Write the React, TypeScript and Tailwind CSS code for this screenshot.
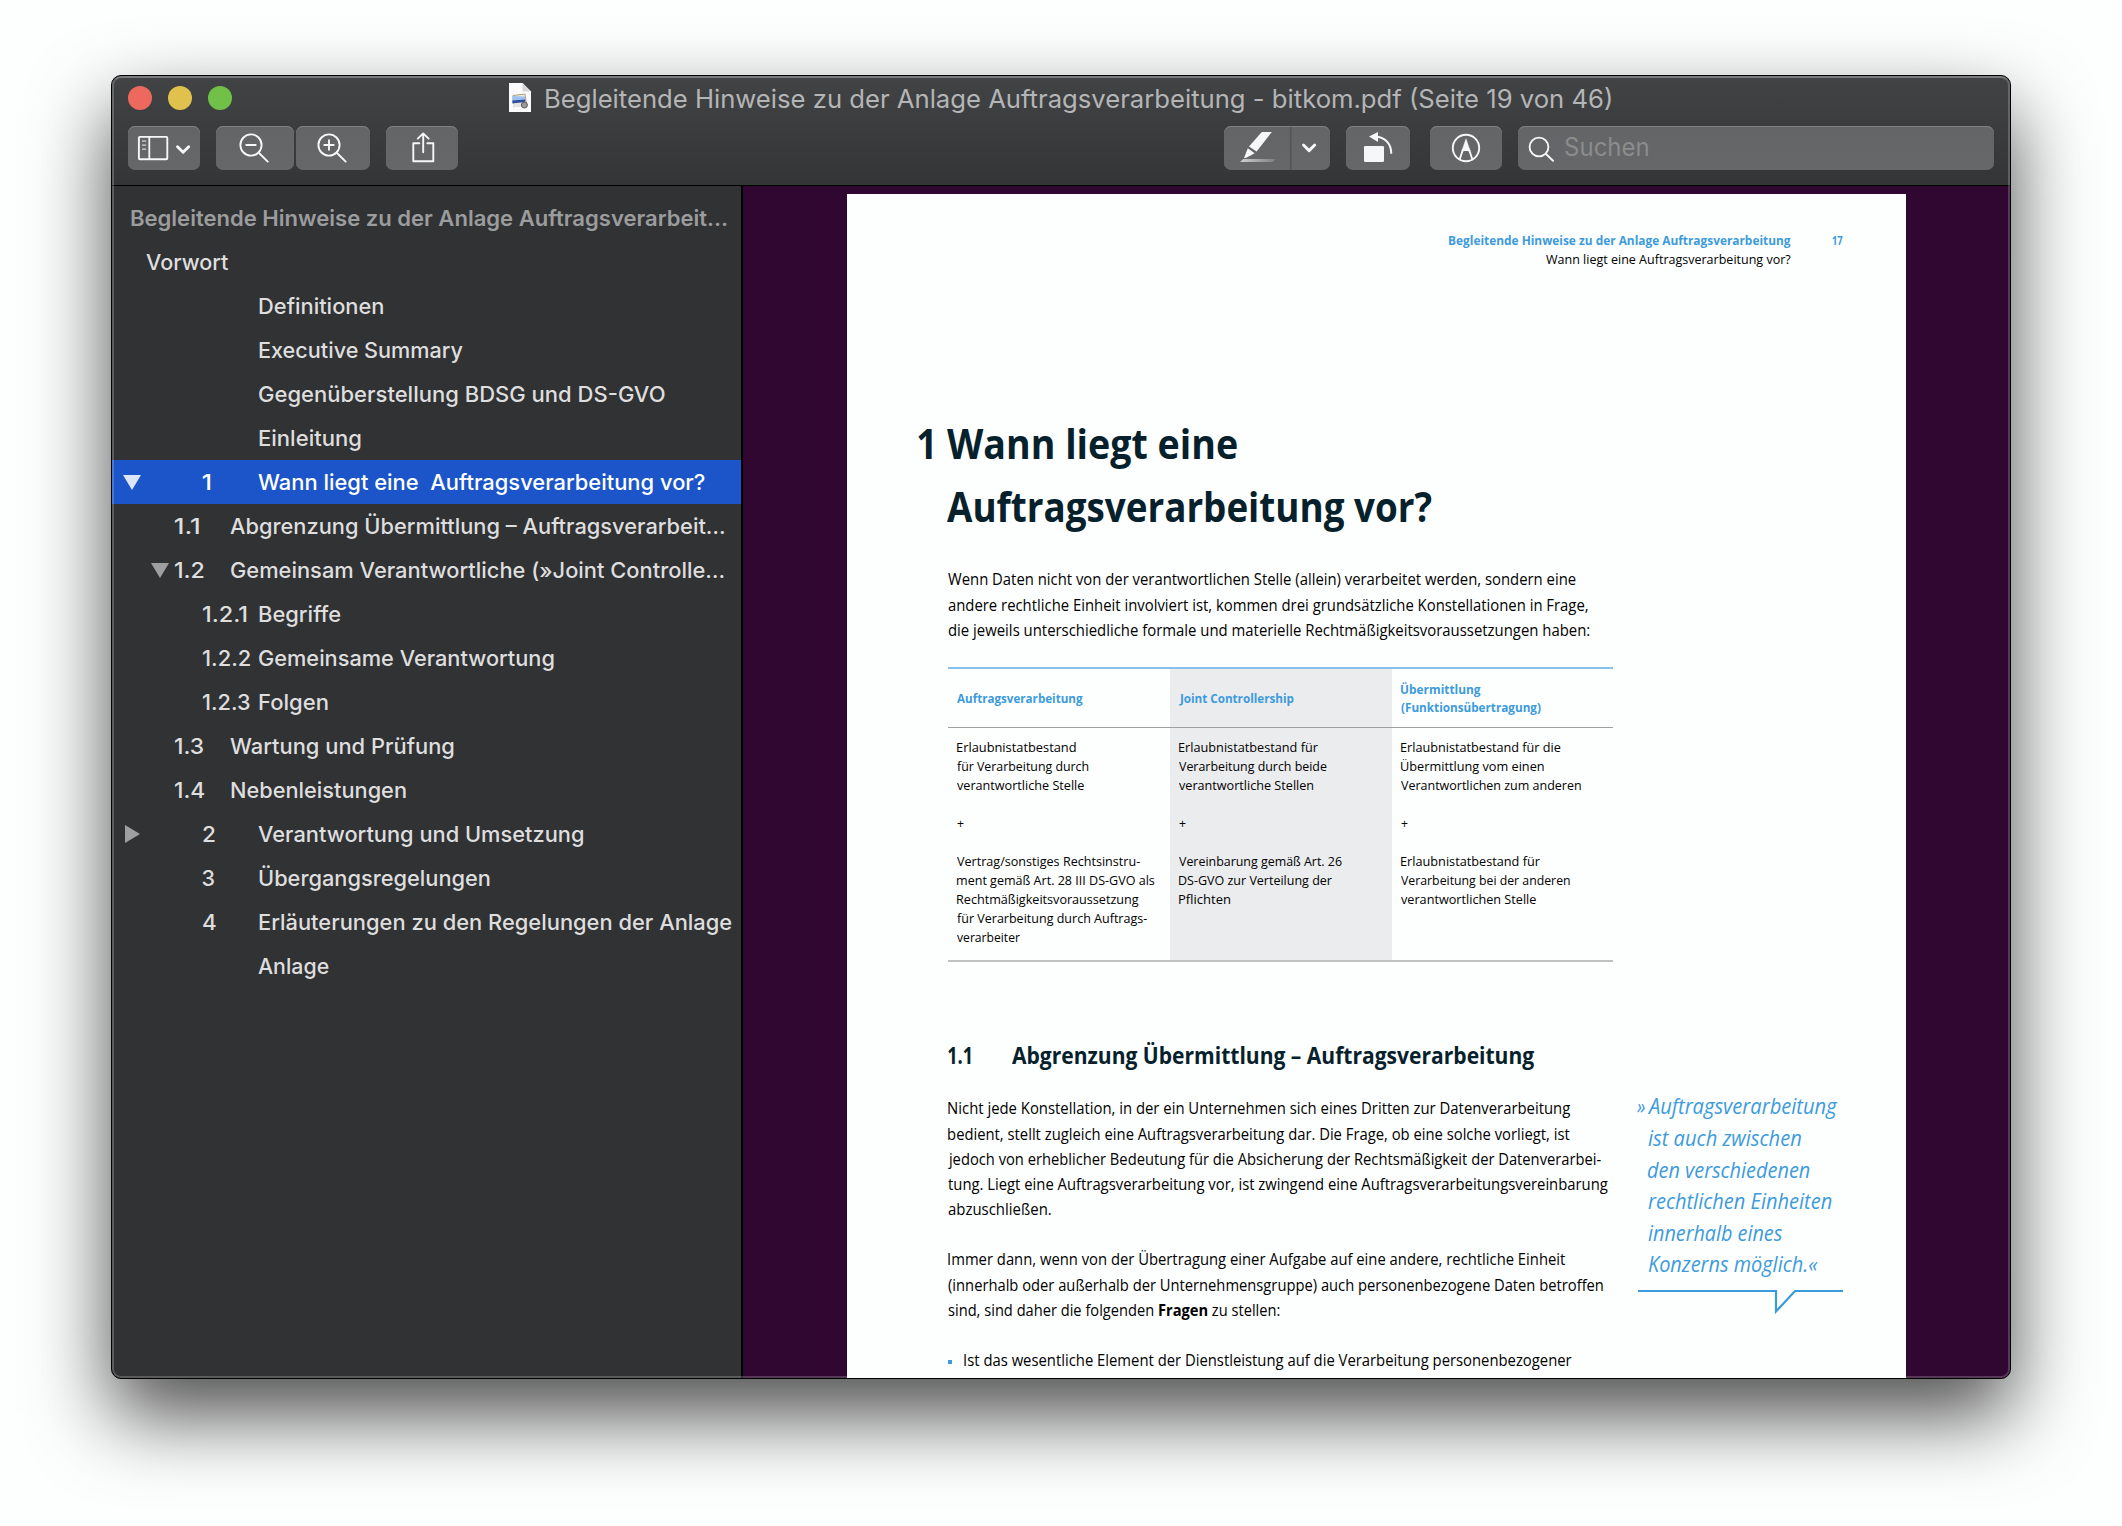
import { useLayoutEffect, useRef, useState } from "react";
import type { ReactNode } from "react";

type FitProps = { w: number; children: ReactNode; className?: string };

/** One line of text whose inked width is fitted to `w` pixels. */
function Fit({ w, children, className = "" }: FitProps) {
  const ref = useRef<HTMLSpanElement>(null);
  const [transform, setTransform] = useState("none");
  useLayoutEffect(() => {
    const el = ref.current;
    if (!el) return;
    let left = 0;
    let ink = el.offsetWidth;
    const ctx = document.createElement("canvas").getContext("2d");
    if (ctx && typeof children === "string") {
      ctx.font = getComputedStyle(el).font;
      const m = ctx.measureText(children);
      left = m.actualBoundingBoxLeft;
      ink = m.actualBoundingBoxLeft + m.actualBoundingBoxRight;
    }
    const s = w / ink;
    setTransform(`translateX(${(left * s).toFixed(2)}px) scaleX(${s.toFixed(4)})`);
  }, [w, children]);
  return (
    <span className="block h-[1lh]" style={{ width: w }}>
      <span ref={ref} className={`inline-block origin-left whitespace-pre ${className}`} style={{ transform }}>
        {children}
      </span>
    </span>
  );
}

type Row = { kind: "top" | "sub" | "leaf"; num?: string; title: string; w: number; numW?: number; tri?: "open" | "closed"; selected?: boolean };

const rows: Row[] = [
  { kind: "top", title: "Definitionen", w: 124.5 },
  { kind: "top", title: "Executive Summary", w: 203.5 },
  { kind: "top", title: "Gegenüberstellung BDSG und DS-GVO", w: 406 },
  { kind: "top", title: "Einleitung", w: 101.5 },
  { kind: "top", num: "1", numW: 8, title: "Wann liegt eine  Auftragsverarbeitung vor?", w: 447, tri: "open", selected: true },
  { kind: "sub", num: "1.1", numW: 24.5, title: "Abgrenzung Übermittlung – Auftragsverarbeit…", w: 494 },
  { kind: "sub", num: "1.2", numW: 28.5, title: "Gemeinsam Verantwortliche (»Joint Controlle…", w: 492.5, tri: "open" },
  { kind: "leaf", num: "1.2.1", numW: 44, title: "Begriffe", w: 81.5 },
  { kind: "leaf", num: "1.2.2", numW: 47, title: "Gemeinsame Verantwortung", w: 294.5 },
  { kind: "leaf", num: "1.2.3", numW: 47, title: "Folgen", w: 69 },
  { kind: "sub", num: "1.3", numW: 28.5, title: "Wartung und Prüfung", w: 223.5 },
  { kind: "sub", num: "1.4", numW: 29, title: "Nebenleistungen", w: 175 },
  { kind: "top", num: "2", numW: 11.5, title: "Verantwortung und Umsetzung", w: 325, tri: "closed" },
  { kind: "top", num: "3", numW: 12, title: "Übergangsregelungen", w: 231 },
  { kind: "top", num: "4", numW: 12.5, title: "Erläuterungen zu den Regelungen der Anlage", w: 472.5 },
  { kind: "top", title: "Anlage", w: 70.5 },
];

const padFor = { top: "pl-[10px]", sub: "pl-[38px]", leaf: "pl-[10px]" };
const slotFor = { top: "w-[80.500px]", sub: "w-[24.500px]", leaf: "w-[80.500px]" };

function SidebarRow({ row }: { row: Row }) {
  return (
    <div className={`flex h-11 items-center ${padFor[row.kind]} ${row.selected ? "bg-[#1b55c9] text-white" : ""}`}>
      <span className={`flex shrink-0 ${slotFor[row.kind]}`}>
        {row.tri && (
          <svg width="20" height="20" viewBox="0 0 20 20" className={row.selected ? "text-[#dce6f8]" : "text-[#9e9fa0]"} fill="currentColor">
            {row.tri === "open" ? <path d="M1 3h18l-9 15z" /> : <path d="M3 1v18l15-9z" />}
          </svg>
        )}
      </span>
      <span className="w-[56.500px] shrink-0">{row.num && <Fit w={row.numW ?? 12}>{row.num}</Fit>}</span>
      <span className={/^[AVW]/.test(row.title) ? "-ml-px" : ""}>
        <Fit w={row.w}>{row.title}</Fit>
      </span>
    </div>
  );
}

function Button({ className, children }: { className: string; children: ReactNode }) {
  return (
    <div className={`h-11 shrink-0 rounded-[7px] bg-linear-to-b from-[#646566] to-[#666768] shadow-[inset_0_1px_0_#7f8081] ${className}`}>
      {children}
    </div>
  );
}

function Toolbar() {
  return (
    <div className="flex pl-4 pr-4 text-[#f6f7f8]">
      <Button className="w-[72px]">
        <svg width="72" height="44" fill="none" stroke="currentColor">
          <rect x="10.9" y="10.9" width="28.4" height="22.4" rx="1" strokeWidth="1.9" />
          <path d="M21.3 11v22" strokeWidth="1.8" />
          <path d="M14 15.2h4.2M14 19.2h4.2M14 23.2h4.2" strokeWidth="1.7" stroke="#b4b5b6" />
          <path d="M49.5 20.8l5.6 5.5 5.6-5.5" strokeWidth="2.9" strokeLinecap="round" strokeLinejoin="round" />
        </svg>
      </Button>
      <Button className="ml-4 w-[78px]">
        <svg width="78" height="44" fill="none" stroke="currentColor" strokeLinecap="round" strokeWidth="1.9">
          <circle cx="35" cy="19" r="10.6" />
          <path d="M30.3 19h9.4M43 27l8.7 8.6" />
        </svg>
      </Button>
      <Button className="ml-0.5 w-[74px]">
        <svg width="74" height="44" fill="none" stroke="currentColor" strokeLinecap="round" strokeWidth="1.9">
          <circle cx="33" cy="19" r="10.6" />
          <path d="M28.3 19h9.4M33 14.3v9.4M41 27l8.7 8.6" />
        </svg>
      </Button>
      <Button className="ml-4 w-[72px]">
        <svg width="72" height="44" fill="none" stroke="currentColor" strokeWidth="1.9" strokeLinecap="round" strokeLinejoin="round">
          <path d="M33.3 17.2h-6v18h20v-18h-6" />
          <path d="M37.2 26.2V7.6M31.8 12.6l5.4-5.2 5.4 5.2" />
        </svg>
      </Button>
      <Button className="ml-auto w-[106px]">
        <svg width="106" height="44" fill="currentColor">
          <defs>
            <linearGradient id="ink" x1="0" x2="1">
              <stop offset="0" stopColor="#d0d1d2" />
              <stop offset="1" stopColor="#7c7d7e" />
            </linearGradient>
          </defs>
          <path d="M37.8 6h10l-15.2 19.4-7.6-5z" />
          <path d="M23.8 22.2l6.9 5-8.4 4.6-2.3.2z" />
          <path d="M19.4 33h32.2l-3 3H16z" fill="url(#ink)" />
          <path d="M66.7 1v43" stroke="#535455" strokeWidth="1.6" />
          <path d="M79.5 19l5.6 5.6 5.6-5.6" fill="none" stroke="currentColor" strokeWidth="2.9" strokeLinecap="round" strokeLinejoin="round" />
        </svg>
      </Button>
      <Button className="ml-4 w-[64px]">
        <svg width="64" height="44" fill="currentColor">
          <rect x="18" y="20" width="20" height="16" rx="1.2" />
          <path d="M23 10.6L32 6v10z" />
          <path d="M30.5 10.8c9 .8 14.8 7.2 14.8 17" fill="none" stroke="currentColor" strokeWidth="2" />
        </svg>
      </Button>
      <Button className="ml-5 w-[72px]">
        <svg width="72" height="44" fill="none" stroke="currentColor">
          <circle cx="36" cy="22" r="13.2" strokeWidth="1.9" />
          <path d="M29.4 34.2L32.8 24h6.4l3.4 10.2" strokeWidth="1.9" />
          <path d="M36 12.8L40.2 25h-1.8L36 23.6 33.6 25h-1.8z" fill="currentColor" strokeWidth="0.5" />
        </svg>
      </Button>
      <Button className="ml-4 flex w-[476px] items-center">
        <svg width="47" height="44" fill="none" stroke="currentColor" strokeWidth="1.9" strokeLinecap="round">
          <circle cx="21" cy="21" r="9.4" />
          <path d="M28 28l7 6.8" />
        </svg>
        <div className="-mt-0.5 text-[25px] leading-8 text-[#8b8c8d]">
          <Fit w={83}>Suchen</Fit>
        </div>
      </Button>
    </div>
  );
}

function DocIcon() {
  return (
    <svg width="24" height="32" viewBox="0 0 24 32">
      <path d="M1 1h13.5L23 9.500V30H1z" fill="#fbfbfb" />
      <path d="M14.500 1v8.500H23z" fill="#d4d5d6" />
      <path d="M5 13.500l12-1.500 1.500 10.800-12.800 2z" fill="#eceadf" stroke="#a9946a" strokeWidth="0.900" />
      <path d="M4.300 14l12.600.4.400 4-13 .6z" fill="#9fc2f0" />
      <path d="M4.300 18.500l13-1-.2 2.600-12.600 1.400z" fill="#2a4f9e" />
      <path d="M4.800 21.700l12-1v3.500l-11.500 1z" fill="#e3e5e6" />
      <circle cx="16.400" cy="23" r="3" fill="#9b9a96" stroke="#5c5b5a" strokeWidth="1" />
    </svg>
  );
}

const columns = [
  {
    head: [["Auftragsverarbeitung", 126]],
    lines: [["Erlaubnistatbestand", 118.5], ["für Verarbeitung durch", 132], ["verantwortliche Stelle", 127], ["", 0], ["+", 6.5], ["", 0], ["Vertrag/sonstiges Rechtsinstru-", 183], ["ment gemäß Art. 28 III DS-GVO als", 197.5], ["Rechtmäßigkeitsvoraussetzung", 181.5], ["für Verarbeitung durch Auftrags-", 190], ["verarbeiter", 63.5]],
  },
  {
    head: [["Joint Controllership", 114.5]],
    lines: [["Erlaubnistatbestand für", 139.5], ["Verarbeitung durch beide", 147.5], ["verantwortliche Stellen", 135], ["", 0], ["+", 6.5], ["", 0], ["Vereinbarung gemäß Art. 26", 162.5], ["DS-GVO zur Verteilung der", 153.5], ["Pflichten", 52]],
  },
  {
    head: [["Übermittlung", 80], ["(Funktionsübertragung)", 139.5]],
    lines: [["Erlaubnistatbestand für die", 159.5], ["Übermittlung vom einen", 143.5], ["Verantwortlichen zum anderen", 180.5], ["", 0], ["+", 6.5], ["", 0], ["Erlaubnistatbestand für", 139.5], ["Verarbeitung bei der anderen", 169.5], ["verantwortlichen Stelle", 135]],
  },
] as { head: [string, number][]; lines: [string, number][] }[];

function Lines({ items }: { items: [string, number][] }) {
  return (
    <>
      {items.map(([text, w], i) => (text ? <Fit key={i} w={w}>{text}</Fit> : <span key={i} className="block h-[1lh]" />))}
    </>
  );
}

function Table() {
  return (
    <div className="mt-[24.300px] w-[665px] border-t-2 border-b-2 border-t-[#86c1eb] border-b-[#bfc2c3] text-[13.200px] leading-[18.930px]">
      <div className="grid grid-cols-[222px_222px_221px]">
        {columns.map((col, i) => (
          <div key={i} className={`flex h-[291px] flex-col ${i === 1 ? "bg-[#ebecee]" : ""}`}>
            <div className="flex h-[59px] flex-col justify-center border-b border-[#9ba0a1] pl-[9.500px] font-bold text-[#3c9bdc]">
              <Lines items={col.head} />
            </div>
            <div className="pl-[9.500px] pt-[10px]">
              <Lines items={col.lines} />
            </div>
          </div>
        ))}
      </div>
    </div>
  );
}

const intro: [string, number][] = [
  ["Wenn Daten nicht von der verantwortlichen Stelle (allein) verarbeitet werden, sondern eine", 628],
  ["andere rechtliche Einheit involviert ist, kommen drei grundsätzliche Konstellationen in Frage,", 639.5],
  ["die jeweils unterschiedliche formale und materielle Rechtmäßigkeitsvoraussetzungen haben:", 642],
];

const section: [string, number][] = [
  ["Nicht jede Konstellation, in der ein Unternehmen sich eines Dritten zur Datenverarbeitung", 622.5],
  ["bedient, stellt zugleich eine Auftragsverarbeitung dar. Die Frage, ob eine solche vorliegt, ist", 622],
  ["jedoch von erheblicher Bedeutung für die Absicherung der Rechtsmäßigkeit der Datenverarbei-", 653],
  ["tung. Liegt eine Auftragsverarbeitung vor, ist zwingend eine Auftragsverarbeitungsvereinbarung", 660],
  ["abzuschließen.", 103.5],
  ["", 0],
  ["Immer dann, wenn von der Übertragung einer Aufgabe auf eine andere, rechtliche Einheit", 617.5],
  ["(innerhalb oder außerhalb der Unternehmensgruppe) auch personenbezogene Daten betroffen", 655],
];

function Page() {
  return (
    <div className="h-[1400px] w-[1058.500px] bg-[#fdfefe] pt-[37px] font-['Open_Sans',sans-serif] font-[450] text-black">
      <div className="flex justify-end pr-[61.500px] text-[13.200px] leading-[19px]">
        <div className="flex flex-col items-end">
          <div className="font-bold text-[#3c9bdc]"><Fit w={342}>Begleitende Hinweise zu der Anlage Auftragsverarbeitung</Fit></div>
          <Fit w={245}>Wann liegt eine Auftragsverarbeitung vor?</Fit>
        </div>
        <div className="ml-[40.500px] w-[12.500px] font-bold text-[#3c9bdc]"><Fit w={11}>17</Fit></div>
      </div>

      <h1 className="mt-[143px] flex text-[41px] font-bold leading-[63px] text-[#06212c]">
        <span className="w-[100px] pl-[70.500px]"><Fit w={13.5}>1</Fit></span>
        <span>
          <Fit w={290}>Wann liegt eine</Fit>
          <Fit w={484.500}>Auftragsverarbeitung vor?</Fit>
        </span>
      </h1>

      <div className="pl-[100.500px]">
        <div className="mt-[29.300px] text-[16.200px] leading-[25.300px]"><Lines items={intro} /></div>
        <Table />
        <h2 className="mt-[78px] flex text-[23.400px] font-bold leading-[30px] text-[#06212c]">
          <span className="w-[64px]"><Fit w={22.500}>1.1</Fit></span>
          <Fit w={522}>Abgrenzung Übermittlung – Auftragsverarbeitung</Fit>
        </h2>
        <div className="mt-[20px] flex">
          <div className="w-[689.500px] pt-[6px] text-[16.200px] leading-[25.170px]">
            <Lines items={section} />
            <Fit w={332}>sind, sind daher die folgenden <b>Fragen</b> zu stellen:</Fit>
            <span className="block h-[1lh]" />
            <div className="flex items-center">
              <span className="mt-[3px] mr-[12.500px] size-[4px] bg-[#3c9bdc]" />
              <Fit w={608}>Ist das wesentliche Element der Dienstleistung auf die Verarbeitung personenbezogener</Fit>
            </div>
          </div>
          <div className="text-[21.300px] font-normal italic leading-[31.600px] text-[#3c9bdc]">
            <div className="flex"><span className="w-[10px]"><Fit w={8.500}>»</Fit></span><Fit w={190.500}>Auftragsverarbeitung</Fit></div>
            <div className="pl-[11px]">
              <Fit w={153.500}>ist auch zwischen</Fit>
              <Fit w={162}>den verschiedenen</Fit>
              <Fit w={184}>rechtlichen Einheiten</Fit>
              <Fit w={134}>innerhalb eines</Fit>
              <Fit w={169.500}>Konzerns möglich.«</Fit>
            </div>
            <svg width="206" height="28" className="mt-[9px] ml-px" fill="none" stroke="#3c9bdc" strokeWidth="2.200">
              <path d="M0 2h138v20.500L157 2h48" />
            </svg>
          </div>
        </div>
      </div>
    </div>
  );
}

export default function App() {
  return (
    <div className="h-[1526px] w-[2122px] overflow-hidden bg-[#fdfefe] pt-[75px] pl-[111px]">
      <div className="relative flex h-[1304px] w-[1900px] flex-col overflow-hidden rounded-[10px] border border-black bg-[#313234] font-['Inter',sans-serif] shadow-[0_36px_80px_rgba(0,0,0,0.7)]">
        <header className="flex h-[110px] shrink-0 flex-col border-b border-black bg-linear-to-b from-[#424345] to-[#343537]">
          <div className="flex h-[50px] items-start pt-[10px] pl-4">
            <span className="size-6 rounded-full bg-[#ed695e]" />
            <span className="ml-4 size-6 rounded-full bg-[#e1c14d]" />
            <span className="ml-4 size-6 rounded-full bg-[#71c047]" />
            <span className="ml-[275.500px] -mt-[4px]"><DocIcon /></span>
            <div className="ml-[14px] -mt-[3px] text-[25.300px] leading-8 text-[#b4b5b6]">
              <Fit w={1065}>Begleitende Hinweise zu der Anlage Auftragsverarbeitung - bitkom.pdf (Seite 19 von 46)</Fit>
            </div>
          </div>
          <Toolbar />
        </header>
        <div className="flex min-h-0 flex-1">
          <aside className="w-[629px] shrink-0 pt-[10px] text-[21.600px] font-medium leading-7 text-[#dededf]">
            <div className="flex h-11 items-center pl-[18.500px] font-semibold text-[#9b9c9d]"><Fit w={595.500}>Begleitende Hinweise zu der Anlage Auftragsverarbeit…</Fit></div>
            <div className="flex h-11 items-center pl-[33.500px]"><Fit w={82}>Vorwort</Fit></div>
            {rows.map((row) => <SidebarRow key={row.title} row={row} />)}
          </aside>
          <main className="flex-1 overflow-hidden border-l-2 border-black bg-[#2f0730] pt-2 pl-[104px]">
            <Page />
          </main>
        </div>
        <div className="pointer-events-none absolute inset-0 rounded-[9px] border-2 border-white/20 border-t-white/30" />
      </div>
    </div>
  );
}
